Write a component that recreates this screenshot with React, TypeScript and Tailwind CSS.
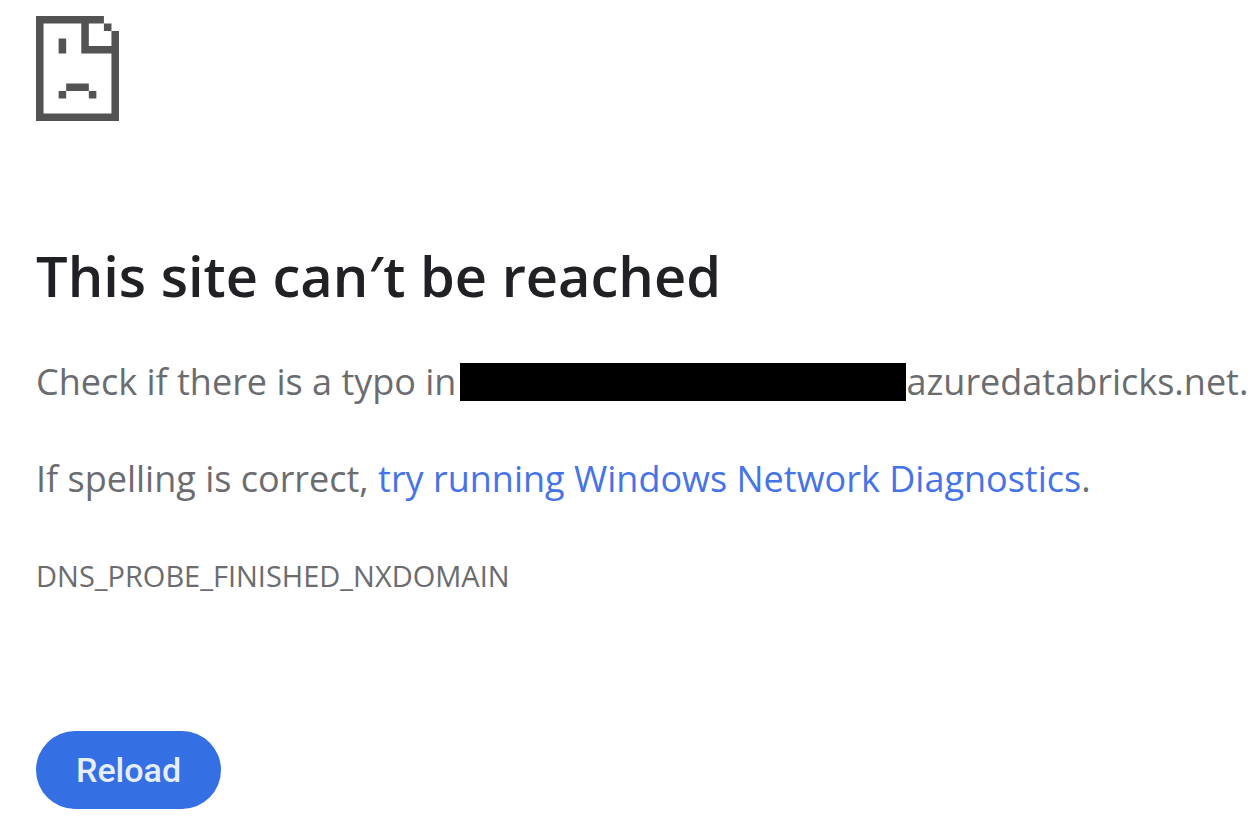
const DIAGNOSTICS_URL = '#diagnostics';

function SadPageIcon() {
  return (
    <svg
      className="w-[83px] h-[105px] text-[#535353]"
      viewBox="0 0 11 14"
      preserveAspectRatio="none"
      fill="currentColor"
      aria-hidden="true"
    >
      <path d="M0 0h9v1H7v3h3V2h1v12H0zM1 1v12h9V5H6V1z" fillRule="evenodd" />
      <path d="M9 1h1v1H9zM3 3h1v2H3zM4 9h3v1H4zM3 10h1v1H3zM7 10h1v1H7z" />
    </svg>
  );
}

export default function App() {
  return (
    <main className="min-h-screen bg-white pl-9 pr-2 pt-4 pb-6 font-['Open_Sans','Noto_Sans',sans-serif] text-[#6b6c70]">
      <SadPageIcon />

      <h1 className="mt-28 text-[56px] leading-[84px] font-semibold text-[#202124]">This site can′t be reached</h1>

      <div className="mt-10 space-y-12 text-[36px] leading-[49px]">
        <p className="flex flex-wrap items-center">
          <span>Check if there is a typo in</span>
          <span className="ml-1 h-[38px] w-[446px] bg-black" />
          <span>azuredatabricks.net.</span>
        </p>
        <p>
          If spelling is correct,{' '}
          <a href={DIAGNOSTICS_URL} className="text-[#4673e8]">
            try running Windows Network Diagnostics
          </a>
          .
        </p>
        <p className="text-[29px]">DNS_PROBE_FINISHED_NXDOMAIN</p>
      </div>

      <button
        type="button"
        className="mt-[131px] h-[78px] rounded-full bg-[#346fe3] px-10 font-['Roboto','Liberation_Sans',sans-serif] text-[34px] font-medium text-[#e6eefc]"
        onClick={() => window.location.reload()}
      >
        Reload
      </button>
    </main>
  );
}
